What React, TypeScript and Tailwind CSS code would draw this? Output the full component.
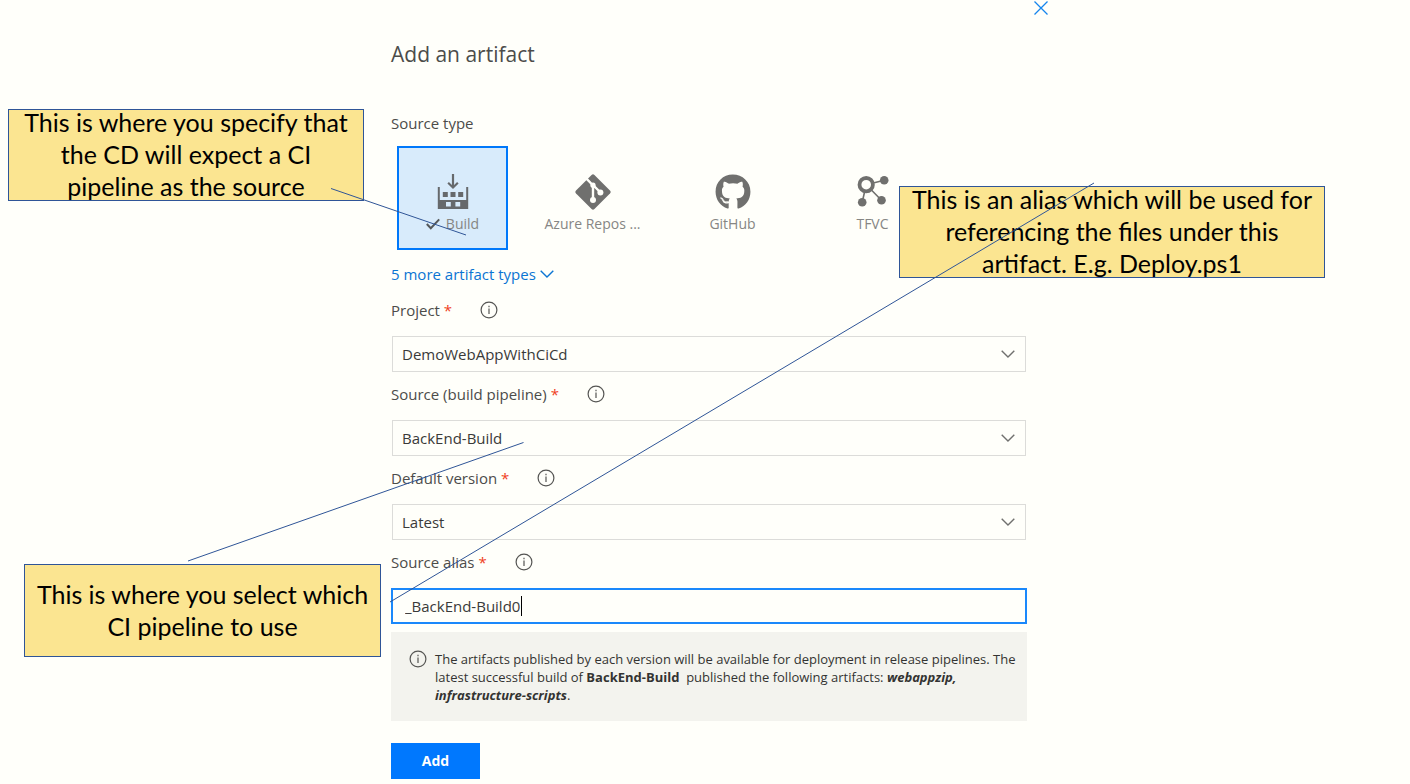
import type { ReactNode } from "react";
import { FaGithub } from "react-icons/fa";

function BuildIcon() {
  return (
    <svg viewBox="0 0 32 36" className="h-9 w-8" fill="currentColor" aria-hidden="true">
      <path d="M14.9 0h2.2v11l3-3 1.5 1.5-5.6 5.6-5.6-5.6L11.9 8l3 3z" />
      <path d="M.8 13h2v13h26.4V13h2v22H.8zM9 28v4.6h4.8V28zM18.4 28v4.6h4.8V28z" fillRule="evenodd" />
      <path d="M5.8 18h5v5h-5zM13.5 18h5v5h-5zM21.2 18h5v5h-5z" />
    </svg>
  );
}

function GitIcon() {
  return (
    <svg viewBox="0 0 36 36" className="size-9" aria-hidden="true">
      <rect x="5" y="5" width="26" height="26" rx="2" transform="rotate(45 18 18)" fill="currentColor" />
      <g fill="none" stroke="#fffffa" strokeWidth="2.4">
        <path d="M11 4.200 17.600 11M18 11v15M18.500 11.500l7 7" />
      </g>
      <g fill="#fffffa">
        <circle cx="18" cy="11.2" r="2.6" />
        <circle cx="18" cy="26" r="3" />
        <circle cx="25.4" cy="18.4" r="3" />
      </g>
    </svg>
  );
}

function TfvcIcon() {
  return (
    <svg viewBox="0 0 32 36" className="h-9 w-8" fill="currentColor" aria-hidden="true">
      <path d="M9.2 10.7 27.2 6.3M9.2 10.7l15.3 15.6M9.2 10.7l-4 17.6" stroke="currentColor" strokeWidth="1.6" />
      <circle cx="9.2" cy="10.7" r="6.7" fill="#fffffa" stroke="currentColor" strokeWidth="3.8" />
      <circle cx="27.2" cy="6.3" r="4.3" />
      <circle cx="24.5" cy="26.3" r="4.3" />
      <circle cx="5.2" cy="28.3" r="4.3" />
    </svg>
  );
}

function InfoIcon() {
  return (
    <svg viewBox="0 0 18 18" className="size-[18px] shrink-0 text-[#555553]" fill="none" stroke="currentColor" aria-hidden="true">
      <circle cx="9" cy="9" r="7.9" strokeWidth="1.2" />
      <path d="M9 7.4v5.6M9 4.8v1.5" strokeWidth="1.2" />
    </svg>
  );
}

function Chevron({ className }: { className: string }) {
  return (
    <svg viewBox="0 0 14 8" className={className} fill="none" stroke="currentColor" strokeWidth="1.4" aria-hidden="true">
      <path d="M.7.8 7 7 13.3.8" />
    </svg>
  );
}

function Tile({ icon, label, selected = false }: { icon: ReactNode; label: string; selected?: boolean }) {
  return (
    <button
      type="button"
      aria-pressed={selected}
      className={
        selected
          ? "flex h-[104px] w-[111px] flex-col items-center border-2 border-[#0078fa] bg-[#d8ebfb] pt-[26px] text-[#66696c]"
          : "flex h-[104px] w-[111px] flex-col items-center border-2 border-transparent pt-[26px] text-[#70706e]"
      }
    >
      {icon}
      <span className="mt-1 flex items-center gap-1.5 text-sm leading-5 whitespace-nowrap text-[#868684]">
        {selected && (
          <svg viewBox="0 0 14 12" className="h-3 w-3.5 text-[#55585a]" fill="none" stroke="currentColor" strokeWidth="2" aria-hidden="true">
            <path d="m.8 6 4 4.2L13.2 1.4" />
          </svg>
        )}
        {label}
      </span>
    </button>
  );
}

function FieldLabel({ id, children }: { id: string; children: ReactNode }) {
  return (
    <div className="flex h-5 items-center gap-7">
      <label htmlFor={id} className="text-[15px] leading-5">
        {children} <span className="text-[#f0401c]">*</span>
      </label>
      <InfoIcon />
    </div>
  );
}

function SelectField({ id, label, value }: { id: string; label: string; value: string }) {
  return (
    <div className="flex flex-col gap-4">
      <FieldLabel id={id}>{label}</FieldLabel>
      <div className="grid items-center px-px">
        <select
          id={id}
          defaultValue={value}
          className="col-start-1 row-start-1 h-9 w-full appearance-none border border-[#dcdcd9] bg-transparent px-[9px] text-[15px] text-[#3a3a39]"
        >
          <option>{value}</option>
        </select>
        <Chevron className="pointer-events-none col-start-1 row-start-1 mr-[11px] h-2 w-3.5 justify-self-end text-[#70706e]" />
      </div>
    </div>
  );
}

function Callout({ className, children }: { className: string; children: ReactNode }) {
  return (
    <aside
      className={`absolute flex items-center justify-center border border-[#2f5597] bg-[#fbe591] pb-0.5 text-center font-[Lato,sans-serif] text-[25px] leading-8 whitespace-nowrap text-black ${className}`}
    >
      <p>{children}</p>
    </aside>
  );
}

export default function App() {
  return (
    <div className="min-h-screen overflow-hidden bg-[#fffffa] pl-2 font-['Open_Sans',sans-serif] text-[#4c4c4a]">
      <main className="relative mx-auto max-w-[692px]">
        <header>
          <div className="flex h-[34px] justify-end px-1.5">
            <button type="button" aria-label="Close" className="flex size-4 items-center justify-center text-[#1585ee]">
              <svg viewBox="0 0 14 14" className="size-3.5" stroke="currentColor" strokeWidth="1.3" aria-hidden="true">
                <path d="m.5.5 13 13M13.5.5l-13 13" />
              </svg>
            </button>
          </div>
          <h1 className="px-7 text-[21px] leading-10">Add an artifact</h1>
        </header>

        <form className="px-7 pt-[39px]" onSubmit={(e) => e.preventDefault()}>
          <h2 className="text-[15px] leading-5">Source type</h2>
          <div className="mt-[13px] flex gap-[29px] pl-1.5">
            <Tile icon={<BuildIcon />} label="Build" selected />
            <Tile icon={<GitIcon />} label="Azure Repos ..." />
            <Tile icon={<FaGithub className="size-9" />} label="GitHub" />
            <Tile icon={<TfvcIcon />} label="TFVC" />
          </div>
          <button type="button" className="mt-3.5 flex items-center gap-1 text-[15px] leading-5 text-[#0b75d3]">
            5 more artifact types
            <Chevron className="h-2 w-3.5" />
          </button>

          <div className="mt-4 flex flex-col gap-3">
            <SelectField id="project" label="Project" value="DemoWebAppWithCiCd" />
            <SelectField id="source" label="Source (build pipeline)" value="BackEnd-Build" />
            <SelectField id="version" label="Default version" value="Latest" />
            <div className="flex flex-col gap-4">
              <FieldLabel id="alias">Source alias</FieldLabel>
              <div className="relative">
                <input
                  id="alias"
                  defaultValue="_BackEnd-Build0"
                  className="block h-9 w-full border-2 border-[#1a88fb] bg-transparent px-3 text-[15px] text-[#3a3a39] outline-none"
                />
                <span className="absolute top-2 left-[130px] h-5 w-px bg-black" />
              </div>
            </div>
          </div>

          <div className="mt-2 flex gap-2 bg-[#f3f3ee] pt-[18px] pr-1 pb-4 pl-[18px]">
            <InfoIcon />
            <p className="pb-px text-[13px] leading-[18px] text-[#333332]">
              The artifacts published by each version will be available for deployment in release pipelines. The latest
              successful build of <b>BackEnd-Build</b>&nbsp; published the following artifacts:{" "}
              <b className="italic">webappzip,</b> <b className="italic">infrastructure-scripts</b>.
            </p>
          </div>

          <button type="submit" className="mt-[22px] block h-9 w-[89px] bg-[#0078fe] text-sm font-bold text-white">
            Add
          </button>
        </form>

        <Callout className="top-[109px] left-[-355px] h-[92px] w-[356px]">
          This is where you specify that
          <br />
          the CD will expect a CI
          <br />
          pipeline as the source
        </Callout>
        <Callout className="top-[564px] left-[-339px] h-[93px] w-[357px]">
          This is where you select which
          <br />
          CI pipeline to use
        </Callout>
        <Callout className="top-[186px] left-[536px] h-[92px] w-[426px]">
          This is an alias which will be used for
          <br />
          referencing the files under this
          <br />
          artifact. E.g. Deploy.ps1
        </Callout>
        <svg
          viewBox="0 0 1410 784"
          className="pointer-events-none absolute top-0 left-[-363px] h-[784px] w-[1410px] max-w-none"
          stroke="#2f5597"
          strokeWidth="1"
          aria-hidden="true"
        >
          <path d="M331 188.5 466 235M188 561l335.5-118.5M390 602l704-419" />
        </svg>
      </main>
    </div>
  );
}
